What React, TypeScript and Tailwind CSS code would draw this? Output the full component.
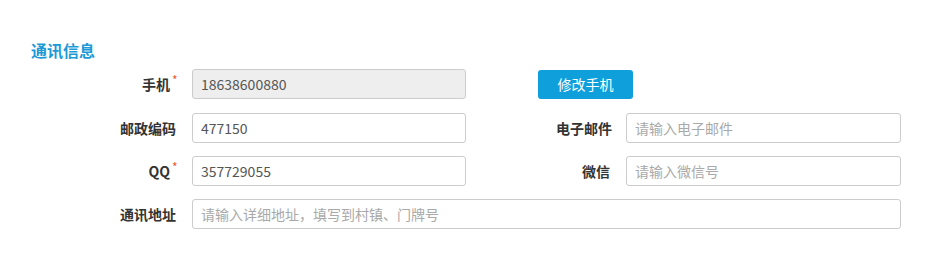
import React from 'react';

const font = { fontFamily: '"Noto Sans CJK SC", "Noto Sans", sans-serif' };

const Label: React.FC<{ text: string; required?: boolean; className?: string }> = ({ text, required, className }) => (
  <div className={`shrink-0 text-right text-[14px] font-bold text-[#333] leading-[30px] ${className ?? ''}`}>
    <span className={`relative ${required ? 'mr-[6px]' : ''}`}>
      {text}
      {required && (
        <span className="absolute left-full top-[-9px] ml-[2px] text-[12px] font-normal text-[#ea5a2c]">*</span>
      )}
    </span>
  </div>
);

const Field: React.FC<{ value?: string; placeholder?: string; disabled?: boolean; className?: string }> = ({
  value,
  placeholder,
  disabled,
  className,
}) => (
  <input
    readOnly
    defaultValue={value}
    placeholder={placeholder}
    style={font}
    className={`h-[30px] rounded-[3px] border border-[#cccccc] px-[8px] text-[14px] text-[#555] placeholder:text-[#a9a9a9] outline-none ${
      disabled ? 'bg-[#eeeeee]' : 'bg-white'
    } ${className ?? ''}`}
  />
);

export default function App() {
  return (
    <div className="w-[942px] h-[278px] bg-white pt-[40px] pl-[31px]" style={font}>
      <h2 className="text-[16px] font-bold leading-[20px] text-[#1c9ad6]">通讯信息</h2>

      <div className="ml-[69px] mt-[9px] flex flex-col gap-[13px]">
        {/* 手机 */}
        <div className="flex items-center mb-[1px]">
          <Label text="手机" required className="w-[76px]" />
          <Field value="18638600880" disabled className="ml-[16px] w-[274px]" />
          <button className="ml-[72px] h-[29px] w-[95px] rounded-[3px] bg-[#0fa0dc] text-[14px] text-white">
            修改手机
          </button>
        </div>

        {/* 邮政编码 / 电子邮件 */}
        <div className="flex items-center">
          <Label text="邮政编码" className="w-[76px]" />
          <Field value="477150" className="ml-[16px] w-[274px]" />
          <Label text="电子邮件" className="w-[146px]" />
          <Field placeholder="请输入电子邮件" className="ml-[14px] w-[275px]" />
        </div>

        {/* QQ / 微信 */}
        <div className="flex items-center">
          <Label text="QQ" required className="w-[76px]" />
          <Field value="357729055" className="ml-[16px] w-[274px]" />
          <Label text="微信" className="w-[144px]" />
          <Field placeholder="请输入微信号" className="ml-[16px] w-[275px]" />
        </div>

        {/* 通讯地址 */}
        <div className="flex items-center">
          <Label text="通讯地址" className="w-[76px]" />
          <Field placeholder="请输入详细地址，填写到村镇、门牌号" className="ml-[16px] w-[709px]" />
        </div>
      </div>
    </div>
  );
}
